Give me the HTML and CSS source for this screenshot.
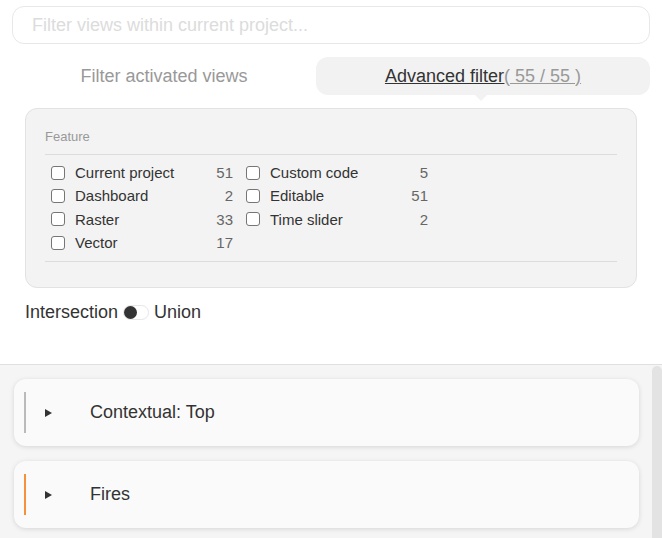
FILE: index.html
```html
<!DOCTYPE html>
<html>
<head>
<meta charset="utf-8">
<link rel="stylesheet" href="styles.css">
</head>
<body>
<div class="page">
  <div class="top">
    <input class="search" type="text" placeholder="Filter views within current project...">
    <div class="tabs">
      <div class="tab">Filter activated views</div>
      <div class="tab active"><span class="tab-title">Advanced filter</span><span class="tab-count">( 55 / 55 )</span></div>
    </div>
    <div class="panel">
      <div class="panel-head">Feature</div>
      <div class="grid">
        <div class="item"><span class="box"></span><span class="label">Current project</span><span class="num">51</span></div>
        <div class="item"><span class="box"></span><span class="label">Dashboard</span><span class="num">2</span></div>
        <div class="item"><span class="box"></span><span class="label">Raster</span><span class="num">33</span></div>
        <div class="item"><span class="box"></span><span class="label">Vector</span><span class="num">17</span></div>
        <div class="item"><span class="box"></span><span class="label">Custom code</span><span class="num">5</span></div>
        <div class="item"><span class="box"></span><span class="label">Editable</span><span class="num">51</span></div>
        <div class="item"><span class="box"></span><span class="label">Time slider</span><span class="num">2</span></div>
      </div>
    </div>
    <div class="mode">
      <span>Intersection</span>
      <span class="toggle"><span class="knob"></span></span>
      <span>Union</span>
    </div>
  </div>
  <div class="list-area">
    <div class="list">
      <div class="card">
        <span class="bar bar-grey"></span>
        <span class="arrow"></span>
        <span class="card-title">Contextual: Top</span>
      </div>
      <div class="card">
        <span class="bar bar-orange"></span>
        <span class="arrow"></span>
        <span class="card-title">Fires</span>
      </div>
    </div>
    <div class="scroll"><div class="thumb"></div></div>
  </div>
</div>
</body>
</html>
```
FILE: styles.css
```css
html, body {
  margin: 0;
  padding: 0;
}
body {
  font-family: "Liberation Sans", Arial, sans-serif;
  color: #333;
  background: #fff;
}
.page {
  height: 538px;
  display: flex;
  flex-direction: column;
  overflow: hidden;
}
.top {
  padding: 6px 12px 0 12px;
}
.search {
  display: block;
  width: 100%;
  box-sizing: border-box;
  height: 38px;
  border: 1px solid #e8e8e8;
  border-radius: 12px;
  padding: 0 19px;
  font-family: "Liberation Sans", Arial, sans-serif;
  font-size: 18px;
  color: #333;
  outline: none;
  background: #fff;
}
.search::placeholder {
  color: #dcdcdc;
}
.tabs {
  margin-top: 13px;
  display: grid;
  grid-template-columns: 304px 1fr;
  height: 38px;
}
.tab {
  display: flex;
  align-items: center;
  justify-content: center;
  font-size: 18px;
  color: #999;
}
.tab.active {
  position: relative;
  background: #f2f2f2;
  border-radius: 12px;
}
.tab.active::after {
  content: "";
  position: absolute;
  left: 50%;
  bottom: -6px;
  margin-left: -8px;
  border-left: 6px solid transparent;
  border-right: 6px solid transparent;
  border-top: 6px solid #f2f2f2;
}
.tab-title {
  color: #333;
  text-decoration: underline;
}
.tab-count {
  color: #999;
  text-decoration: underline;
}
.panel {
  margin: 13px 13px 0 13px;
  background: #f3f3f3;
  border: 1px solid #e2e2e2;
  border-radius: 12px;
  padding: 19px 19px 25px 19px;
}
.panel-head {
  font-size: 13px;
  line-height: 18px;
  color: #999;
  padding-bottom: 8px;
  border-bottom: 1px solid #dcdcdc;
}
.grid {
  display: grid;
  grid-auto-flow: column;
  grid-template-rows: repeat(4, 23.3px);
  grid-template-columns: 182px 182px;
  column-gap: 13px;
  padding: 6px 0 7px 6px;
  border-bottom: 1px solid #dcdcdc;
}
.item {
  display: flex;
  align-items: center;
  font-size: 15px;
  color: #333;
}
.box {
  width: 12px;
  height: 12px;
  border: 1px solid #767676;
  border-radius: 3px;
  background: #fff;
  flex: none;
}
.label {
  margin-left: 10px;
}
.num {
  margin-left: auto;
  color: #666;
}
.mode {
  margin: 13px 0 41px 13px;
  display: flex;
  align-items: center;
  font-size: 18px;
  line-height: 22px;
  color: #333;
}
.toggle {
  position: relative;
  width: 24px;
  height: 13px;
  margin: 0 5px 0 5px;
  border: 1px solid #e6e6e6;
  border-radius: 8px;
  background: #fff;
}
.knob {
  position: absolute;
  left: 0;
  top: 0;
  width: 13px;
  height: 13px;
  border-radius: 50%;
  background: #333;
}
.list-area {
  flex: 1;
  display: flex;
  border-top: 1px solid #e0e0e0;
  background: #f5f5f5;
  overflow: hidden;
}
.list {
  flex: 1;
  padding: 14px 13px 0 14px;
  display: flex;
  flex-direction: column;
  gap: 15px;
}
.card {
  height: 67px;
  box-sizing: border-box;
  display: flex;
  align-items: center;
  padding: 0 10px;
  background: #fafafa;
  border-radius: 12px;
  box-shadow: 0 1px 5px rgba(0, 0, 0, 0.13);
}
.bar {
  width: 2px;
  height: 41px;
  flex: none;
}
.bar-grey {
  background: #bbbbbb;
}
.bar-orange {
  background: #f4913a;
}
.arrow {
  margin-left: 19px;
  width: 0;
  height: 0;
  border-left: 7px solid #333;
  border-top: 4px solid transparent;
  border-bottom: 4px solid transparent;
}
.card-title {
  margin-left: 38px;
  font-size: 18px;
  color: #333;
}
.scroll {
  width: 10px;
  padding-top: 1px;
}
.thumb {
  height: 100%;
  background: #e3e3e3;
  border-radius: 5px 5px 0 0;
}
```
